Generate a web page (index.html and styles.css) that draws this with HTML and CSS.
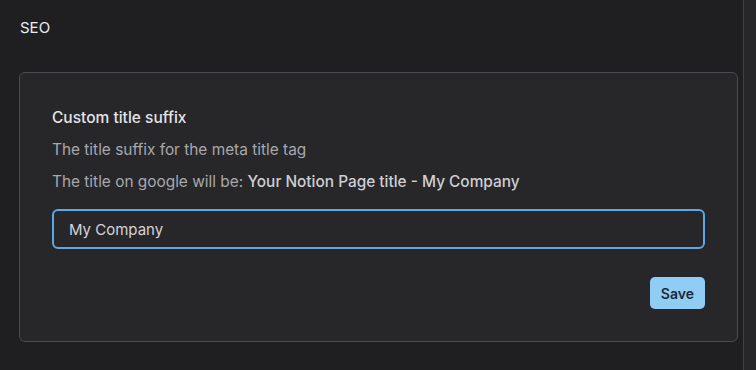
FILE: index.html
```html
<!DOCTYPE html>
<html lang="en">
<head>
    <meta charset="UTF-8">
    <title>SEO Settings</title>
    <link rel="stylesheet" href="styles.css">
</head>
<body>

    <div class="main">
        <h2 class="section-title">SEO</h2>

        <div class="card">
            <h3>Custom title suffix</h3>
            <p class="hint">The title suffix for the meta title tag</p>
            <p class="hint">The title on google will be: <span class="preview">Your Notion Page title - My Company</span></p>
            <input class="field" value="My Company" />
            <div class="actions">
                <button class="save">Save</button>
            </div>
        </div>
    </div>

    <div class="side-strip"></div>

</body>
</html>
```

FILE: styles.css
```css
body {
    display: flex;
    margin: 0;
    height: 100vh;
    overflow: hidden;
    background-color: #1f1f22;
    font-family: Inter, "Noto Sans", sans-serif;
    color: #e4e4e7;
}

.main {
    flex: 1;
    padding: 0 5px 0 19px;
}

.section-title {
    font-size: 15px;
    font-weight: 400;
    margin: 17px 0 0 1px;
    line-height: 22px;
    color: #ececee;
}

.card {
    margin-top: 33px;
    padding: 34px 32px 32px 32px;
    background-color: #27272a;
    border: 1px solid #4b4b50;
    border-radius: 6px;
}

.card h3 {
    font-size: 15.5px;
    font-weight: 500;
    line-height: 22px;
    margin: 0;
    color: #e4e4e7;
}

.hint {
    font-size: 15.4px;
    line-height: 22px;
    margin: 10px 0 0 0;
    color: #a8a8ad;
}

.preview {
    color: #cfcfd3;
    font-weight: 500;
}

.field {
    display: block;
    box-sizing: border-box;
    width: 100%;
    height: 40px;
    margin-top: 16px;
    padding: 0 15px;
    background-color: #27272a;
    border: 2px solid #5aa9e6;
    border-radius: 6px;
    outline: none;
    font-family: inherit;
    font-size: 15px;
    color: #d4d4d8;
}

.actions {
    display: flex;
    justify-content: flex-end;
    margin-top: 28px;
}

.save {
    height: 32px;
    padding: 0 11px;
    background-color: #90cdf4;
    border: none;
    border-radius: 5px;
    font-family: inherit;
    font-size: 14px;
    font-weight: 600;
    color: #1f2937;
}

.side-strip {
    width: 12px;
    background-color: #27272a;
    border-left: 1px solid #3f3f44;
}
```
